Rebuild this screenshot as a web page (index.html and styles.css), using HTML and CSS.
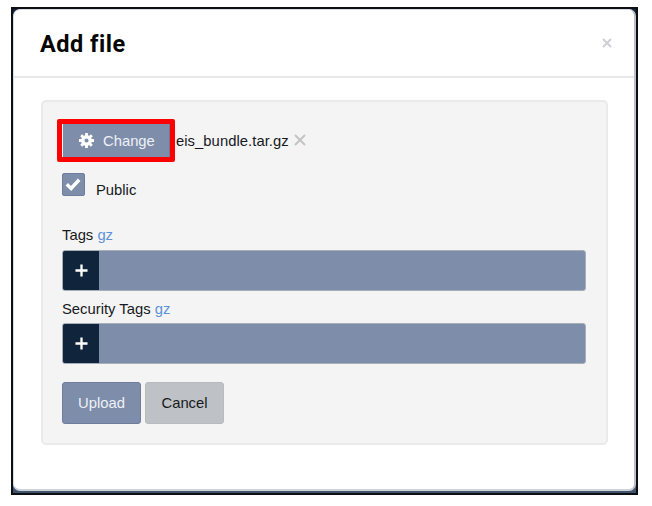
FILE: index.html
```html
<!DOCTYPE html>
<html lang="en">
<head>
<meta charset="utf-8">
<title>Add file</title>
<link rel="stylesheet" href="styles.css">
</head>
<body>
<main class="frame">
  <section class="modal">
    <header class="modal-header">
      <h1>Add file</h1>
      <svg class="close" viewBox="0 0 10 10"><path d="M1 1l8 8M9 1l-8 8"/></svg>
    </header>
    <div class="panel">
      <div class="file-row">
        <div class="change">
          <svg class="gear" viewBox="0 0 16 16"><circle cx="8" cy="8" r="4" stroke-width="3.6"/><path stroke-width="3" d="M8 0v4M8 12v4M0 8h4M12 8h4M2.3 2.3l2.8 2.8M10.9 10.9l2.8 2.8M13.7 2.3l-2.8 2.8M5.1 10.9l-2.8 2.8"/></svg>
          <span>Change</span>
        </div>
        <span class="filename">eis_bundle.tar.gz</span>
        <svg class="remove" viewBox="0 0 12 12"><path d="M1 1l10 10M11 1L1 11"/></svg>
      </div>
      <div class="public-row">
        <span class="checkbox"><svg viewBox="0 0 16 14"><path d="M1.8 7.2l4.3 4.2 8.1-8.6"/></svg></span>
        <span class="public-label">Public</span>
      </div>
      <div class="label">Tags <a>gz</a></div>
      <div class="tag-input"><span class="add"><svg viewBox="0 0 14 14"><path d="M7 .5v13M.5 7h13"/></svg></span></div>
      <div class="label second">Security Tags <a>gz</a></div>
      <div class="tag-input"><span class="add"><svg viewBox="0 0 14 14"><path d="M7 .5v13M.5 7h13"/></svg></span></div>
      <div class="actions">
        <button class="upload">Upload</button>
        <button class="cancel">Cancel</button>
      </div>
    </div>
  </section>
</main>
</body>
</html>
```
FILE: styles.css
```css
* { box-sizing: border-box; }
body {
  margin: 0;
  padding: 7px 0 0 11px;
  background: #fff;
  color: #17191c;
  font: 14.8px/18px "Liberation Sans", Arial, sans-serif;
}
svg { display: block; fill: none; stroke: currentColor; }
.frame {
  width: 627px;
  height: 488px;
  border: 2px solid #0d0f12;
  background: linear-gradient(#10233d, #42546c);
}
.modal {
  width: 623px;
  height: 482px;
  border: 1px solid #d9dde3;
  border-width: 1px 2px 2px 1px;
  border-right-color: #b9c1cd;
  border-bottom-color: #ccd3da;
  border-radius: 7px;
  background: #fff;
}
.modal-header {
  display: flex;
  align-items: center;
  justify-content: space-between;
  height: 68px;
  padding: 0 22px 0 26px;
  border-bottom: 2px solid #e5e7ea;
}
h1 {
  margin: 2px 0 0;
  color: #060606;
  font: 700 23.5px/30px Roboto, sans-serif;
  letter-spacing: .5px;
}
.close { width: 10px; height: 10px; color: #cfd0d3; stroke-width: 2; }
.panel {
  width: 567px;
  height: 345px;
  margin: 22px 0 0 27px;
  padding: 17px 20px 0 19px;
  border: 2px solid #eaeaea;
  border-radius: 5px;
  background: #f4f4f4;
}
.file-row { display: flex; align-items: center; height: 43px; margin-left: -5px; }
.change {
  display: flex;
  align-items: center;
  width: 118px;
  height: 43px;
  padding-left: 17px;
  border: 5px solid #fe0000;
  border-radius: 2px;
  background: linear-gradient(90deg, #f4f4f4 1px, #7e8daa 1px);
  box-shadow: inset -1px 0 #6c7b9b;
  color: #eef1f6;
}
.gear { width: 15px; height: 15px; margin-right: 9px; color: #fff; }
.filename { width: 113px; margin: 1px 0 0 1px; letter-spacing: .05px; }
.remove { width: 12px; height: 12px; margin: -2px 0 0 5px; color: #c3c3c3; stroke-width: 2; }
.public-row { display: flex; height: 64px; padding-top: 11px; }
.checkbox {
  display: flex;
  align-items: center;
  justify-content: center;
  width: 23px;
  height: 23px;
  border: 1px solid #6e7d9d;
  border-radius: 2px;
  background: #7e8daa;
  color: #fff;
}
.checkbox svg { width: 16px; height: 14px; margin: -2px 1px 0 0; stroke-width: 3.5; }
.public-label { margin: 8px 0 0 11px; }
.label { height: 24px; }
.label a { color: #5d92d8; }
.label.second { height: 23px; margin-top: 9px; }
.tag-input {
  display: flex;
  width: 524px;
  height: 42px;
  border: 1px solid #a8aeb8;
  border-radius: 3px;
  background: #7e8daa;
  overflow: hidden;
}
.label + .tag-input { height: 41px; }
.add {
  display: flex;
  align-items: center;
  justify-content: center;
  width: 36px;
  background: #10243c;
  color: #fff;
}
.add svg { width: 13px; height: 13px; stroke-width: 2.5; }
.actions { display: flex; gap: 4px; margin-top: 18px; }
button {
  width: 79px;
  height: 42px;
  padding: 0;
  border: 1px solid #6e7d9d;
  border-radius: 3px;
  background: #7e8daa;
  color: #eef1f6;
  font: inherit;
}
.cancel { border-color: #b7bbc0; background: #bec2c6; color: #17191c; }
```
